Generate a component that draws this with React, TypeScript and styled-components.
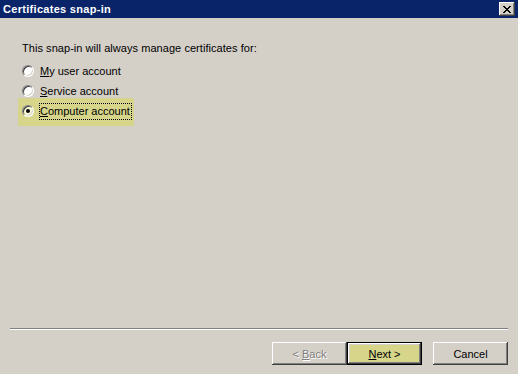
import React from "react";
import styled, { createGlobalStyle } from "styled-components";

const Global = createGlobalStyle`
  html, body { margin: 0; padding: 0; background: #d4d0c8; }
  body { font-family: "Liberation Sans", Arial, sans-serif; font-size: 11px; color: #000; }
`;

const Window = styled.div`
  width: 518px;
  height: 374px;
  display: flex;
  flex-direction: column;
  background: #d4d0c8;
  overflow: hidden;
`;

const TitleBar = styled.div`
  height: 18px;
  flex: none;
  display: flex;
  align-items: center;
  justify-content: space-between;
  background: #0a246a;
  padding: 0 3px 0 3px;
`;

const TitleText = styled.span`
  color: #fff;
  font-weight: bold;
  font-size: 11px;
  letter-spacing: 0.3px;
`;

const bevel = `
  box-shadow: inset -1px -1px #404040, inset 1px 1px #ffffff,
    inset -2px -2px #808080, inset 2px 2px #d4d0c8;
`;

const CloseButton = styled.div`
  width: 16px;
  height: 14px;
  background: #d4d0c8;
  ${bevel}
  display: flex;
  align-items: center;
  justify-content: center;
`;

const Content = styled.div`
  flex: 1;
  padding: 24px 22px 0 22px;
  display: flex;
  flex-direction: column;
`;

const Intro = styled.div`
  line-height: 13px;
  margin-bottom: 6px;
  letter-spacing: 0.05px;
`;

const Row = styled.div<{ $highlight?: boolean }>`
  display: flex;
  align-items: center;
  height: 20px;
  width: fit-content;
  ${(p) =>
    p.$highlight
      ? `background: #d6d58a;
         border-radius: 2px;
         margin: -3px 0 0 -4px;
         padding: 3px 2px 5px 4px;
         `
      : ""}
`;

const Radio = styled.span<{ $checked?: boolean; $hot?: boolean }>`
  width: 12px;
  height: 12px;
  border-radius: 50%;
  box-sizing: border-box;
  background: ${(p) => (p.$hot ? "#fcfcd8" : "#fff")};
  border: 1px solid;
  border-color: #808080 #fff #fff #808080;
  box-shadow: inset 1px 1px #404040, inset -1px -1px #d4d0c8;
  display: flex;
  align-items: center;
  justify-content: center;
  flex: none;
  &::after {
    content: "";
    display: ${(p) => (p.$checked ? "block" : "none")};
    width: 4px;
    height: 4px;
    border-radius: 50%;
    background: #000;
  }
`;

const Label = styled.span<{ $focus?: boolean }>`
  margin-left: 5px;
  padding: 1px 1px 1px 0;
  line-height: 13px;
  border: 1px dotted ${(p) => (p.$focus ? "#000" : "transparent")};
`;

const U = styled.span`
  text-decoration: underline;
`;

const Footer = styled.div`
  flex: none;
  display: flex;
  flex-direction: column;
`;

const Separator = styled.div`
  margin: 0 10px;
  border-top: 1px solid #808080;
  border-bottom: 1px solid #fff;
  height: 0;
`;

const ButtonRow = styled.div`
  display: flex;
  justify-content: flex-end;
  padding: 12px 10px 9px 10px;
`;

const Button = styled.div<{ $default?: boolean; $disabled?: boolean; $gap?: boolean }>`
  width: 75px;
  height: 23px;
  box-sizing: border-box;
  display: flex;
  align-items: center;
  justify-content: center;
  margin-left: ${(p) => (p.$gap ? "11px" : "0")};
  background: ${(p) => (p.$default ? "#d6d58a" : "#d4d0c8")};
  color: ${(p) => (p.$disabled ? "#808080" : "#000")};
  text-shadow: ${(p) => (p.$disabled ? "1px 1px #fff" : "none")};
  border: ${(p) => (p.$default ? "1px solid #000" : "none")};
  ${bevel}
`;

export default function App() {
  return (
    <>
      <Global />
      <Window>
        <TitleBar>
          <TitleText>Certificates snap-in</TitleText>
          <CloseButton>
            <svg width="8" height="7" viewBox="0 0 8 7" shapeRendering="crispEdges">
              <path
                d="M0 0h2v1h-2zM6 0h2v1h-2zM1 1h2v1h-2zM5 1h2v1h-2zM2 2h4v1h-4zM3 3h2v1h-2zM2 4h4v1h-4zM1 5h2v1h-2zM5 5h2v1h-2zM0 6h2v1h-2zM6 6h2v1h-2z"
                fill="#000"
              />
            </svg>
          </CloseButton>
        </TitleBar>
        <Content>
          <Intro>This snap-in will always manage certificates for:</Intro>
          <Row>
            <Radio />
            <Label>
              <U>M</U>y user account
            </Label>
          </Row>
          <Row>
            <Radio />
            <Label>
              <U>S</U>ervice account
            </Label>
          </Row>
          <Row $highlight>
            <Radio $checked $hot />
            <Label $focus>
              <U>C</U>omputer account
            </Label>
          </Row>
        </Content>
        <Footer>
          <Separator />
          <ButtonRow>
            <Button $disabled>
              &lt;&nbsp;<U>B</U>ack
            </Button>
            <Button $default>
              <U>N</U>ext &gt;
            </Button>
            <Button $gap>Cancel</Button>
          </ButtonRow>
        </Footer>
      </Window>
    </>
  );
}
